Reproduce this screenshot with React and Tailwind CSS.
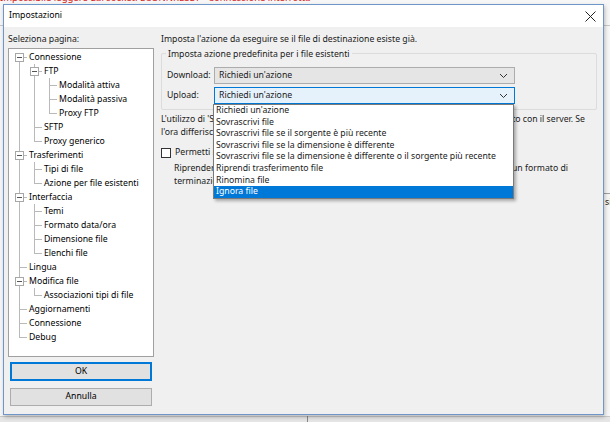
import React from 'react';

const TREE = [
  { t: 'Connessione', d: 0, kids: true },
  { t: 'FTP', d: 1, kids: true },
  { t: 'Modalità attiva', d: 2 },
  { t: 'Modalità passiva', d: 2 },
  { t: 'Proxy FTP', d: 2 },
  { t: 'SFTP', d: 1 },
  { t: 'Proxy generico', d: 1 },
  { t: 'Trasferimenti', d: 0, kids: true },
  { t: 'Tipi di file', d: 1 },
  { t: 'Azione per file esistenti', d: 1 },
  { t: 'Interfaccia', d: 0, kids: true },
  { t: 'Temi', d: 1 },
  { t: 'Formato data/ora', d: 1 },
  { t: 'Dimensione file', d: 1 },
  { t: 'Elenchi file', d: 1 },
  { t: 'Lingua', d: 0 },
  { t: 'Modifica file', d: 0, kids: true },
  { t: 'Associazioni tipi di file', d: 1 },
  { t: 'Aggiornamenti', d: 0 },
  { t: 'Connessione', d: 0 },
  { t: 'Debug', d: 0 },
];

const OPTIONS = [
  "Richiedi un'azione",
  'Sovrascrivi file',
  'Sovrascrivi file se il sorgente è più recente',
  'Sovrascrivi file se la dimensione è differente',
  'Sovrascrivi file se la dimensione è differente o il sorgente più recente',
  'Riprendi trasferimento file',
  'Rinomina file',
  'Ignora file',
];

// true if a later sibling at depth c exists below row i
function continues(i, c) {
  for (let j = i + 1; j < TREE.length; j++) {
    if (TREE[j].d < c) return false;
    if (TREE[j].d === c) return true;
  }
  return false;
}

function GuideCell({ kind, first, box }) {
  return (
    <span className="relative w-[15px] h-full shrink-0">
      {kind === 'line' && <span className="absolute left-[7px] top-0 bottom-0 w-px bg-[#b9b9b9]" />}
      {(kind === 'tee' || kind === 'elbow') && (
        <>
          <span
            className={`absolute left-[7px] w-px bg-[#b9b9b9] ${first ? 'top-[7px]' : 'top-0'} ${
              kind === 'tee' ? 'bottom-0' : 'h-[7px]'
            }`}
          />
          <span className="absolute left-[7px] top-[7px] w-[8px] h-px bg-[#b9b9b9]" />
        </>
      )}
      {box && (
        <span className="absolute left-[3px] top-[3px] w-[9px] h-[9px] border border-[#a7a7a7] bg-white flex items-center justify-center">
          <span className="w-[5px] h-px bg-[#555]" />
        </span>
      )}
    </span>
  );
}

function Tree() {
  return (
    <div className="flex-1 bg-white border border-[#a0a0a0] pl-[3px] pt-px overflow-hidden">
      {TREE.map((n, i) => {
        const cells = [];
        for (let c = 0; c < n.d; c++) {
          cells.push(<GuideCell key={c} kind={continues(i, c) ? 'line' : 'none'} />);
        }
        cells.push(
          <GuideCell key="own" kind={continues(i, n.d) ? 'tee' : 'elbow'} first={i === 0} box={n.kids} />
        );
        return (
          <div key={i} className="flex h-[14px] items-stretch">
            {cells}
            <span className="pl-[2px] leading-[14px] whitespace-nowrap text-black">{n.t}</span>
          </div>
        );
      })}
    </div>
  );
}

function Chevron() {
  return (
    <svg width="9" height="6" viewBox="0 0 9 6" className="shrink-0">
      <polyline points="1,1 4.5,4.5 8,1" fill="none" stroke="#333" strokeWidth="1" />
    </svg>
  );
}

function Combo({ value, focused }) {
  return (
    <div
      className={`w-[301px] h-[17px] flex items-center justify-between pl-[4px] pr-[6px] border ${
        focused ? 'bg-[#e5f1fb] border-[#0078d7]' : 'bg-[#e5e5e5] border-[#acacac]'
      }`}
    >
      <span>{value}</span>
      <Chevron />
    </div>
  );
}

function Line({ left, right, w = 'w-[424px]' }) {
  return (
    <div className={`flex h-[13px] leading-[13px] ${w} whitespace-nowrap`}>
      <span className="flex-1 overflow-hidden">{left}</span>
      {right && <span className="shrink-0 pl-1">{right}</span>}
    </div>
  );
}

export default function App() {
  return (
    <div className="relative w-[610px] h-[422px] overflow-hidden bg-[#f7f7f7] font-['Noto_Sans',sans-serif] text-[8.7px] text-[#1a1a1a]">
      {/* background application behind the dialog */}
      <div className="absolute left-0 top-[-9px] text-[9.5px] text-[#d42020] whitespace-nowrap">
        Impossibile leggere dal socket: ECONNRESET - Connessione interrotta
      </div>
      <div className="absolute left-0 right-0 top-[25px] h-px bg-[#c8c8c8]" />
      <div className="absolute left-[604px] top-[193px] w-[10px] h-px bg-[#a0a0a0]" />
      <div className="absolute left-[605px] top-[196px]">si</div>
      <div className="absolute left-0 right-0 top-[416px] bottom-0 bg-[#e6e6e6] border-t border-[#c9c9c9]" />
      <div className="absolute left-[307px] top-[416px] bottom-0 w-px bg-[#888]" />

      {/* dialog window */}
      <div className="absolute left-[3px] top-[4px] w-[601px] h-[411px] flex flex-col border border-[#6f96c9] bg-[#f0f0f0] shadow-[1px_2px_4px_rgba(0,0,0,0.25)]">
        <div className="h-[22px] bg-white flex items-center justify-between pl-[5px] pr-[7px] shrink-0">
          <span className="text-black">Impostazioni</span>
          <svg width="11" height="11" viewBox="0 0 11 11">
            <path d="M0.5 0.5 L10.5 10.5 M10.5 0.5 L0.5 10.5" stroke="#222" strokeWidth="1" />
          </svg>
        </div>

        <div className="flex-1 flex gap-[7px] pl-[4px] pr-[6px] pt-[4px] pb-[8px]">
          {/* left column */}
          <div className="w-[146px] flex flex-col">
            <div className="h-[16px] leading-[16px] mb-[1px]">Seleziona pagina:</div>
            <Tree />
            <button className="mt-[5px] mx-[2px] h-[19px] bg-[#e1e1e1] border-2 border-[#0078d7] text-black">OK</button>
            <button className="mt-[7px] mx-[2px] h-[18px] bg-[#e1e1e1] border border-[#adadad] text-black">Annulla</button>
          </div>

          {/* right column */}
          <div className="relative flex-1 flex flex-col">
            <div className="h-[16px] leading-[16px]">Imposta l'azione da eseguire se il file di destinazione esiste già.</div>

            <div className="relative mt-[6px] h-[57px] border border-[#dcdcdc] rounded-[2px] pl-[5px] pt-[13px] flex flex-col gap-[3px]">
              <span className="absolute left-[4px] top-[-7px] px-[2px] bg-[#f0f0f0] leading-[14px]">
                Imposta azione predefinita per i file esistenti
              </span>
              <div className="flex items-center">
                <span className="w-[47px]">Download:</span>
                <Combo value="Richiedi un'azione" />
              </div>
              <div className="flex items-center">
                <span className="w-[47px]">Upload:</span>
                <Combo value="Richiedi un'azione" focused />
              </div>
            </div>

            <div className="mt-[3px]">
              <Line
                left="L'utilizzo di 'Sovrascrivi file se il sorgente è più recente' richiede che l'orario sia"
                right="sincronizzato con il server. Se"
              />
              <Line left="l'ora differisce, il risultato potrebbe non essere quello atteso." />
            </div>

            <div className="mt-[8px] flex items-center gap-[4px] h-[12px]">
              <span className="w-[10px] h-[10px] bg-white border border-[#333]" />
              <span className="whitespace-nowrap">Permetti il ripristino dei trasferimenti per i file binari</span>
            </div>
            <div className="mt-[3px] pl-[13px]">
              <Line
                w="w-[394px]"
                left="Riprendere i trasferimenti di file di testo può causare problemi se il server usa"
                right="un formato di"
              />
              <Line w="w-[394px]" left="terminazione di riga diverso." />
            </div>

            {/* open dropdown list */}
            <div className="absolute left-[52px] top-[73px] w-[301px] bg-white border border-[#7a7a7a] shadow-[2px_2px_3px_rgba(0,0,0,0.3)]">
              {OPTIONS.map((o, i) => (
                <div
                  key={i}
                  className={`h-[11.6px] leading-[11.6px] pl-[2px] whitespace-nowrap ${
                    i === OPTIONS.length - 1 ? 'bg-[#0078d7] text-white' : ''
                  }`}
                >
                  {o}
                </div>
              ))}
            </div>
          </div>
        </div>
      </div>
    </div>
  );
}
